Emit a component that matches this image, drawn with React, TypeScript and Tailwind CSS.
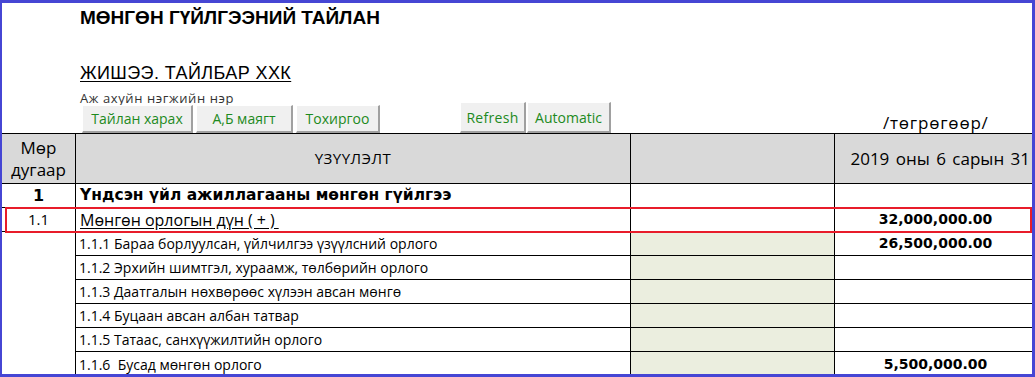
import React from "react";

const FONT = { fontFamily: '"Open Sans", "Noto Sans", sans-serif' };
const BOLD = { fontFamily: '"DejaVu Sans", Verdana, sans-serif' };

const Btn = ({ label, className = "" }: { label: string; className?: string }) => (
  <div
    className={`flex items-center justify-center bg-[#f0f0f0] border-t border-l border-t-white border-l-white border-b-2 border-r-2 border-b-[#a0a0a0] border-r-[#a0a0a0] text-[14px] text-[#1d8a1d] ${className}`}
    style={FONT}
  >
    {label}
  </div>
);

const ROWS: { label: string; value?: string }[] = [
  { label: "1.1.1 Бараа борлуулсан, үйлчилгээ үзүүлсний орлого", value: "26,500,000.00" },
  { label: "1.1.2 Эрхийн шимтгэл, хураамж, төлбөрийн орлого" },
  { label: "1.1.3 Даатгалын нөхвөрөөс хүлээн авсан мөнгө" },
  { label: "1.1.4 Буцаан авсан албан татвар" },
  { label: "1.1.5 Татаас, санхүүжилтийн орлого" },
  { label: "1.1.6  Бусад мөнгөн орлого", value: "5,500,000.00" },
];

export default function App() {
  return (
    <div className="w-[1035px] h-[377px] overflow-hidden bg-white border-t-[3px] border-l-2 border-r-[3px] border-b-[3px] border-[#4646d4] flex flex-col">
      {/* header area */}
      <div className="h-[130px] flex flex-col">
        <div
          className="pl-[78px] pt-[4px] text-[19px] leading-[22px] font-bold text-black"
          style={{ fontFamily: '"Liberation Sans", Arial, sans-serif' }}
        >
          МӨНГӨН ГҮЙЛГЭЭНИЙ ТАЙЛАН
        </div>
        <div
          className="pl-[78px] mt-[34px] text-[18px] leading-[20px] text-black tracking-[0.4px]"
          style={{ fontFamily: '"Liberation Sans", Arial, sans-serif' }}
        >
          <span className="underline underline-offset-2">ЖИШЭЭ. ТАЙЛБАР ХХК</span>
        </div>
        <div className="pl-[78px] mt-[8px] h-[11px] text-[13px] leading-[14px] text-[#333] tracking-[0.6px]" style={FONT}>
          Аж ахуйн нэгжийн нэр
        </div>
        <div className="flex items-end pl-[80px]">
          <div className="flex gap-[3px]">
            <Btn label="Тайлан харах" className="w-[111px] h-[28px]" />
            <Btn label="А,Б маягт" className="w-[97px] h-[28px]" />
            <Btn label="Тохиргоо" className="w-[84px] h-[28px]" />
          </div>
          <div className="flex gap-px ml-[80px]">
            <Btn label="Refresh" className="w-[66px] h-[31px] tracking-[0.3px]" />
            <Btn label="Automatic" className="w-[84px] h-[31px]" />
          </div>
          <div className="ml-[272px] text-[17px] leading-[20px] text-black tracking-[0.8px]" style={FONT}>
            /төгрөгөөр/
          </div>
        </div>
      </div>

      {/* table */}
      <div className="relative border-t border-black grid grid-cols-[74px_555px_204px_197px] text-black" style={FONT}>
        {/* header row */}
        <div className="h-[50px] bg-[#d9d9d9] border-r border-b border-black flex items-center justify-center text-center text-[17px] leading-[22px]">
          Мөр
          <br />
          дугаар
        </div>
        <div className="h-[50px] bg-[#d9d9d9] border-r border-b border-black flex items-center justify-center text-[15px] tracking-[0.5px]">
          ҮЗҮҮЛЭЛТ
        </div>
        <div className="h-[50px] bg-[#d9d9d9] border-r border-b border-black" />
        <div className="h-[50px] bg-[#d9d9d9] border-b border-black flex items-center justify-end pr-[2px] text-[17px] [word-spacing:2px]">
          2019 оны 6 сарын 31
        </div>

        {/* row 1 */}
        <div className="h-[24px] border-r border-b border-black flex items-center justify-center text-[16px] font-bold" style={BOLD}>
          1
        </div>
        <div className="h-[24px] border-r border-b border-black flex items-center pl-[4px] text-[15.5px] font-bold" style={BOLD}>
          Үндсэн үйл ажиллагааны мөнгөн гүйлгээ
        </div>
        <div className="h-[24px] border-r border-b border-black" />
        <div className="h-[24px] border-b border-black" />

        {/* row 1.1 */}
        <div className="h-[24px] border-r border-b border-black flex items-center justify-center text-[15px]">
          1.1
        </div>
        <div className="h-[24px] border-r border-b border-black flex items-center pl-[4px] text-[16px]">
          <span className="underline underline-offset-2">
            Мөнгөн орлогын дүн <span className="tracking-[4px]">(+)</span>
          </span>
        </div>
        <div className="h-[24px] border-r border-b border-black" />
        <div className="h-[24px] border-b border-black flex items-center justify-center pl-[4px] text-[14px] font-bold" style={BOLD}>
          32,000,000.00
        </div>

        {/* rows 1.1.x */}
        <div className="row-span-6 border-r border-black" />
        {ROWS.map((r, i) => (
          <React.Fragment key={r.label}>
            <div
              className={`h-[24px] border-r border-black flex items-center pl-[3px] text-[14px] whitespace-pre ${i < ROWS.length - 1 ? "border-b" : ""}`}
            >
              {r.label}
            </div>
            <div className={`h-[24px] bg-[#ebeedf] border-r border-black ${i < ROWS.length - 1 ? "border-b" : ""}`} />
            <div
              className={`h-[24px] border-black flex items-center justify-center pl-[4px] text-[14px] font-bold ${i < ROWS.length - 1 ? "border-b" : ""}`}
              style={BOLD}
            >
              {r.value ?? ""}
            </div>
          </React.Fragment>
        ))}

        {/* selection highlight on row 1.1 */}
        <div className="absolute left-[3px] right-0 top-[73px] h-[26px] border-[2.5px] border-[#e81c2a] pointer-events-none" />
      </div>
    </div>
  );
}
